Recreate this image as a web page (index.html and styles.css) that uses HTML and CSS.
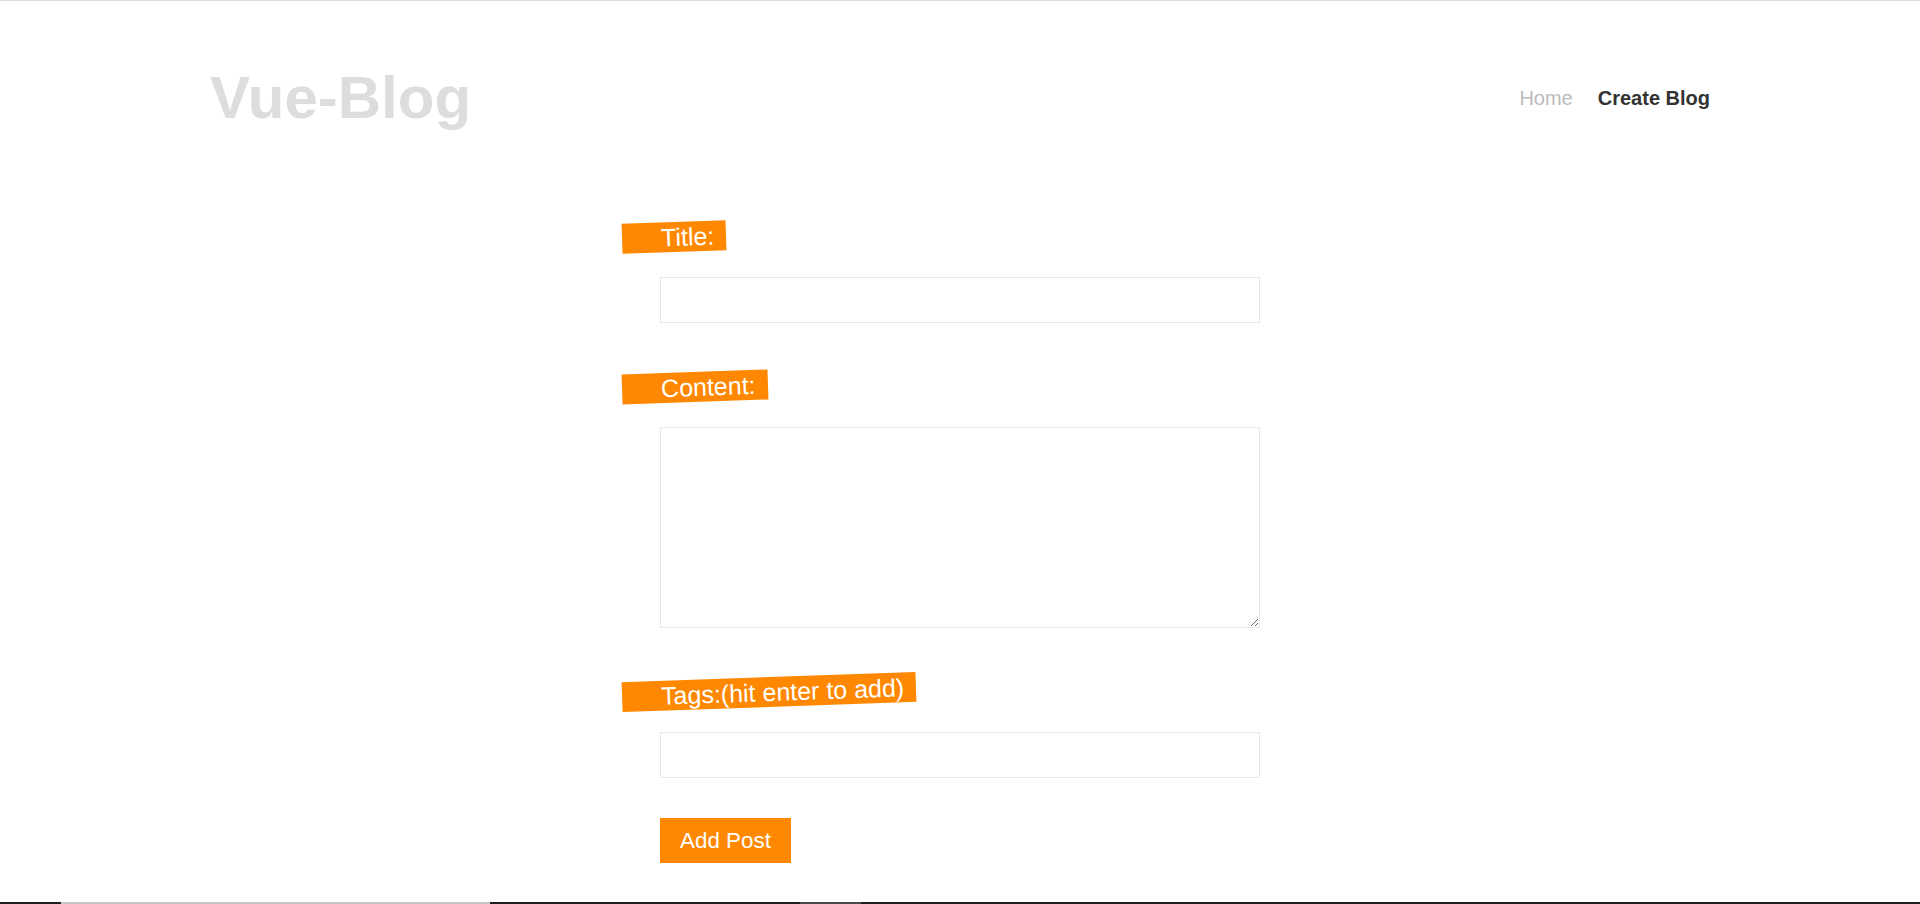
FILE: index.html
```html
<!DOCTYPE html>
<html lang="en">
<head>
<meta charset="utf-8">
<title>Vue-Blog</title>
<link rel="stylesheet" href="styles.css">
</head>
<body>
<div class="page">
  <header class="site-header">
    <h1 class="brand">Vue-Blog</h1>
    <nav class="nav">
      <a class="nav-link" href="#">Home</a>
      <a class="nav-link active" href="#">Create Blog</a>
    </nav>
  </header>
  <main class="main">
    <form class="post-form">
      <div class="field">
        <label class="field-label" for="title">Title:</label>
        <input class="field-input" id="title" type="text">
      </div>
      <div class="field">
        <label class="field-label" for="content">Content:</label>
        <textarea class="field-textarea" id="content"></textarea>
      </div>
      <div class="field">
        <label class="field-label" for="tags">Tags:(hit enter to add)</label>
        <input class="field-input" id="tags" type="text">
      </div>
      <button class="submit-btn" type="button">Add Post</button>
    </form>
  </main>
  <footer class="strip">
    <span class="seg seg-a"></span>
    <span class="seg seg-b"></span>
    <span class="seg seg-c"></span>
    <span class="seg seg-d"></span>
    <span class="seg seg-e"></span>
  </footer>
</div>
</body>
</html>
```

FILE: styles.css
```css
html, body {
  margin: 0;
  padding: 0;
  overflow: hidden;
  background: #fff;
}

body {
  font-family: "Liberation Sans", Arial, sans-serif;
}

.page {
  border-top: 1px solid #dcdcdc;
  display: flex;
  flex-direction: column;
  height: 903px;
}

.site-header {
  width: 1500px;
  margin: 0 auto;
  height: 194px;
  display: flex;
  justify-content: space-between;
  align-items: center;
}

.brand {
  margin: 0;
  font-size: 60px;
  line-height: 60px;
  font-weight: 700;
  color: #dddddd;
}

.nav {
  display: flex;
  gap: 25px;
  align-items: center;
}

.nav-link {
  font-size: 20px;
  line-height: 20px;
  color: #bbbbbb;
  text-decoration: none;
}

.nav-link.active {
  color: #333333;
  font-weight: 700;
}

.main {
  flex: 1;
}

.post-form {
  width: 600px;
  margin: 0 auto;
  padding-top: 27px;
  display: flex;
  flex-direction: column;
  align-items: flex-start;
}

.field {
  display: flex;
  flex-direction: column;
  align-items: flex-start;
  margin-bottom: 49px;
}

.field:last-of-type {
  margin-bottom: 40px;
}

.field-label {
  display: block;
  margin-left: -38px;
  padding: 0 12px 0 39px;
  height: 30px;
  line-height: 30px;
  font-size: 25px;
  color: #fff;
  background: #ff8800;
  transform: rotate(-2deg);
}

.field-input,
.field-textarea {
  box-sizing: border-box;
  width: 600px;
  margin: 25px 0 0;
  border: 1px solid #e8e8e8;
  background: #fff;
  font-family: "Liberation Sans", Arial, sans-serif;
  font-size: 16px;
  outline: none;
}

.field-input {
  height: 46px;
  padding: 0 10px;
}

.field-textarea {
  height: 201px;
  padding: 10px;
  display: block;
}

.submit-btn {
  box-sizing: border-box;
  width: 131px;
  height: 45px;
  padding: 0;
  border: none;
  background: #ff8800;
  color: #fff;
  font-family: "Liberation Sans", Arial, sans-serif;
  font-size: 22.4px;
  cursor: pointer;
}

.strip {
  height: 2px;
  display: flex;
  background: #1f1f1f;
}

.seg {
  display: block;
  height: 2px;
}

.seg-a { width: 61px; }
.seg-b { width: 429px; background: #c6c6c6; }
.seg-c { width: 310px; }
.seg-d { width: 61px; background: #4a4a4a; }
.seg-e { flex: 1; }
```
